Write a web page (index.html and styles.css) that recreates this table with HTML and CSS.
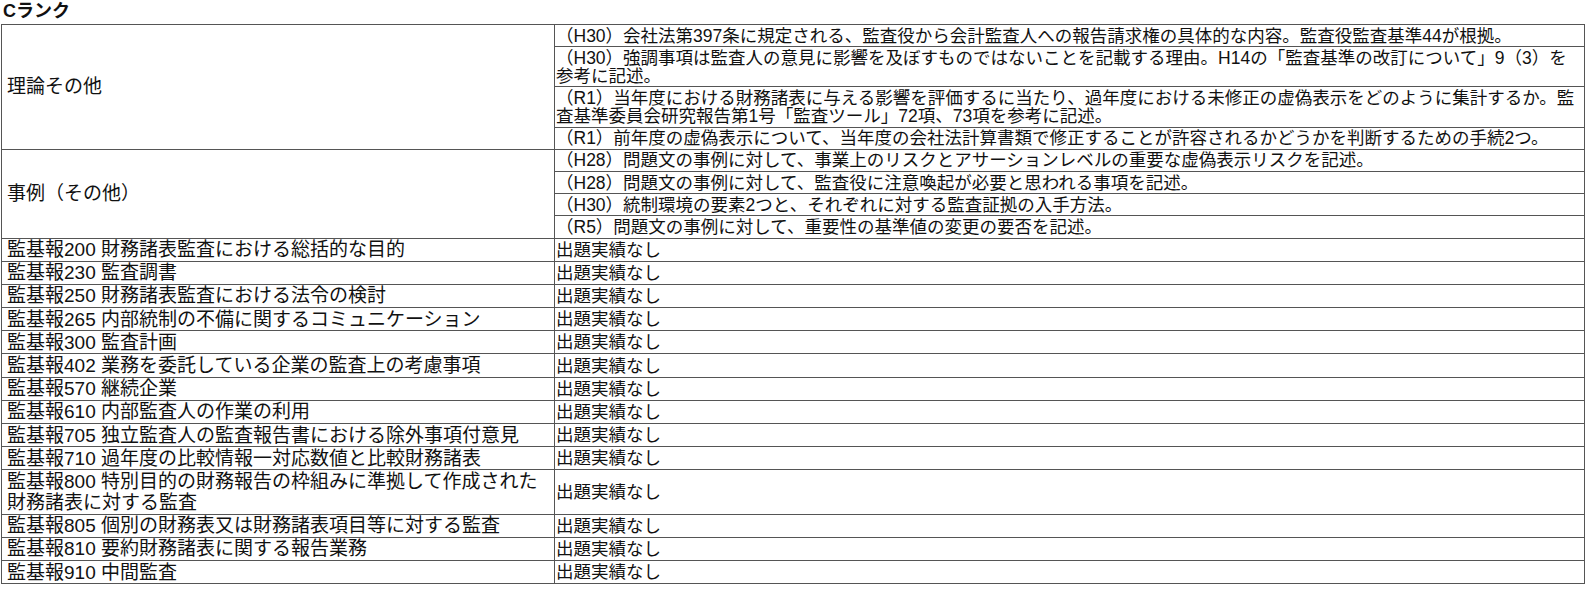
FILE: index.html
```html
<!DOCTYPE html>
<html lang="ja">
<head>
<meta charset="utf-8">
<title>Cランク</title>
<link rel="stylesheet" href="styles.css">
</head>
<body>
<h2 class="title">Cランク</h2>
<table class="rank">
<colgroup><col class="c1"><col class="c2"></colgroup>
<tbody>
<tr><td class="cat" rowspan="4">理論その他</td><td class="desc">（H30）会社法第397条に規定される、監査役から会計監査人への報告請求権の具体的な内容。監査役監査基準44が根拠。</td></tr>
<tr><td class="desc">（H30）強調事項は監査人の意見に影響を及ぼすものではないことを記載する理由。H14の「監査基準の改訂について」9（3）を<br>参考に記述。</td></tr>
<tr><td class="desc">（R1）当年度における財務諸表に与える影響を評価するに当たり、過年度における未修正の虚偽表示をどのように集計するか。監<br>査基準委員会研究報告第1号「監査ツール」72項、73項を参考に記述。</td></tr>
<tr><td class="desc">（R1）前年度の虚偽表示について、当年度の会社法計算書類で修正することが許容されるかどうかを判断するための手続2つ。</td></tr>
<tr><td class="cat" rowspan="4">事例（その他）</td><td class="desc">（H28）問題文の事例に対して、事業上のリスクとアサーションレベルの重要な虚偽表示リスクを記述。</td></tr>
<tr><td class="desc">（H28）問題文の事例に対して、監査役に注意喚起が必要と思われる事項を記述。</td></tr>
<tr><td class="desc">（H30）統制環境の要素2つと、それぞれに対する監査証拠の入手方法。</td></tr>
<tr><td class="desc">（R5）問題文の事例に対して、重要性の基準値の変更の要否を記述。</td></tr>
<tr><td class="cat">監基報200 財務諸表監査における総括的な目的</td><td class="desc">出題実績なし</td></tr>
<tr><td class="cat">監基報230 監査調書</td><td class="desc">出題実績なし</td></tr>
<tr><td class="cat">監基報250 財務諸表監査における法令の検討</td><td class="desc">出題実績なし</td></tr>
<tr><td class="cat">監基報265 内部統制の不備に関するコミュニケーション</td><td class="desc">出題実績なし</td></tr>
<tr><td class="cat">監基報300 監査計画</td><td class="desc">出題実績なし</td></tr>
<tr><td class="cat">監基報402 業務を委託している企業の監査上の考慮事項</td><td class="desc">出題実績なし</td></tr>
<tr><td class="cat">監基報570 継続企業</td><td class="desc">出題実績なし</td></tr>
<tr><td class="cat">監基報610 内部監査人の作業の利用</td><td class="desc">出題実績なし</td></tr>
<tr><td class="cat">監基報705 独立監査人の監査報告書における除外事項付意見</td><td class="desc">出題実績なし</td></tr>
<tr><td class="cat">監基報710 過年度の比較情報一対応数値と比較財務諸表</td><td class="desc">出題実績なし</td></tr>
<tr><td class="cat">監基報800 特別目的の財務報告の枠組みに準拠して作成された<br>財務諸表に対する監査</td><td class="desc">出題実績なし</td></tr>
<tr><td class="cat">監基報805 個別の財務表又は財務諸表項目等に対する監査</td><td class="desc">出題実績なし</td></tr>
<tr><td class="cat">監基報810 要約財務諸表に関する報告業務</td><td class="desc">出題実績なし</td></tr>
<tr><td class="cat">監基報910 中間監査</td><td class="desc">出題実績なし</td></tr>
</tbody>
</table>
</body>
</html>
```

FILE: styles.css
```css
html {
  overflow: hidden;
}
html, body {
  margin: 0;
  padding: 0;
  background: #ffffff;
}
body {
  padding: 0 1px;
  font-family: "Liberation Sans", "Noto Sans CJK JP", sans-serif;
  color: #111;
}
.title {
  margin: 0;
  padding: 1px 0 0 2px;
  height: 24px;
  box-sizing: border-box;
  font-size: 18px;
  line-height: 20px;
  font-weight: bold;
}
.rank {
  border-collapse: collapse;
  width: 1583px;
  table-layout: fixed;
}
.c1 { width: 553px; }
.c2 { width: 1030px; }
.rank td {
  border: 1px solid #555;
  vertical-align: middle;
  white-space: nowrap;
}
.cat {
  font-size: 19px;
  line-height: 21px;
  padding: 0.6px 3px 0.6px 5px;
}
.desc {
  font-size: 17.5px;
  line-height: 18px;
  padding: 1.6px 3px 1.6px 1px;
}
```
